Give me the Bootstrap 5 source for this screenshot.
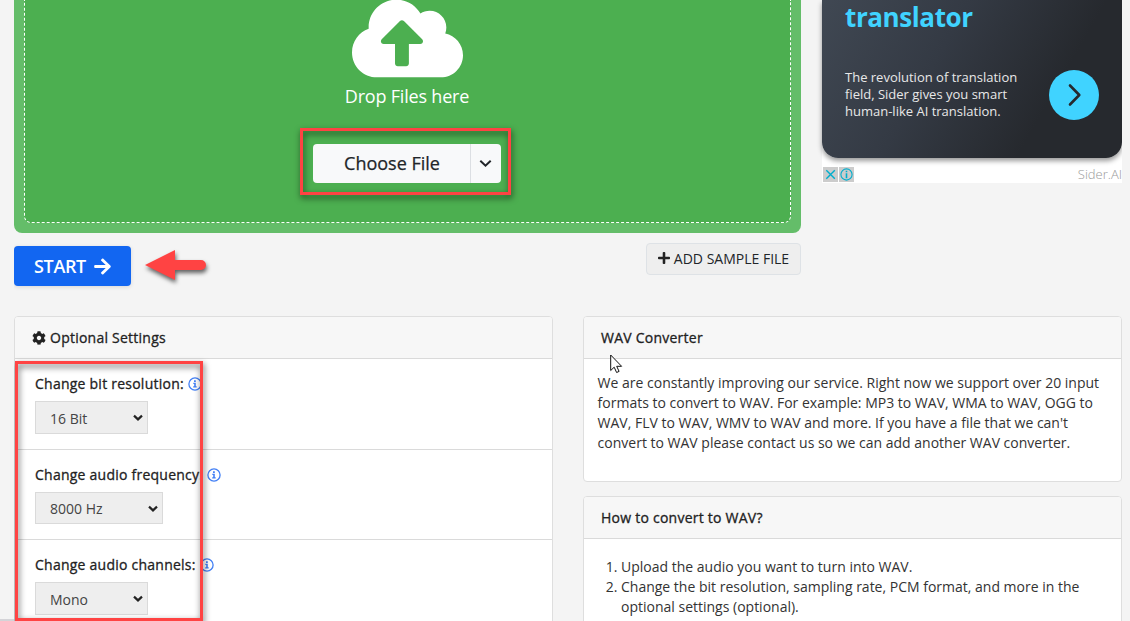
<!DOCTYPE html>
<html lang="en">
<head>
<meta charset="utf-8">
<meta name="viewport" content="width=device-width, initial-scale=1">
<title>WAV Converter</title>
<link rel="stylesheet" href="https://cdn.jsdelivr.net/npm/bootstrap@5.3.0/dist/css/bootstrap.min.css">
<style>
body{font-family:"Open Sans",sans-serif;font-size:14px;line-height:20px;color:#333;background:#f4f4f4;height:621px;overflow:hidden}
.page{width:1108px;height:621px;margin-left:14px;overflow:hidden}
.main-col{width:787px}
.dropzone{height:233px;background:#64bd69;border-radius:0 0 8px 8px;padding:0 10px 10px}
.drop-inner{height:223px;background:#4caf50;border:1px dashed #fff;border-top:0;border-radius:0 0 7px 7px;color:#fff}
.cloud{width:111px;height:89px;margin-top:-6px;flex:none}
.drop-label{font-size:18px;line-height:27px;letter-spacing:-.2px;margin-right:1px}
.choose{height:39px;margin:34px 2px 0 0}
.choose .btn{background:#f8f9fa;border:0;color:#212529;padding:0}
.choose .pick{width:158px;font-size:18px;-webkit-text-stroke:.25px #212529;border-right:1px solid #dcdfe3;border-radius:4px 0 0 4px;padding-left:2px}
.choose .more{width:30px;border-radius:0 4px 4px 0}
.hl{border:3px solid #ff4343;filter:drop-shadow(1px 3px 3px rgba(0,0,0,.65));pointer-events:none}
.hl-pick{left:-13px;top:-16px;width:211px;height:67px}
.hl-set{left:0;top:44px;width:188px;height:260px;z-index:3}
.actions{height:83px;padding-top:10px}
.start{width:117px;height:40px;margin-top:3px;background:#1266f1;font-size:18px;font-weight:600;letter-spacing:-.35px;color:#fff;border:0;border-radius:4px;padding:0;box-shadow:0 1px 4px rgba(0,0,0,.12)}
.arrow{margin:-2px 0 0 -1px}
.sample{width:155px;height:32px;background:#eee;border:1px solid #dee2e6;border-radius:4px;font-size:14px;color:#212529;padding:0 0 2px}
.ad{width:300px;height:183px;background:#fff}
.ad-box{height:158px;border-radius:0 0 16px 16px;background:linear-gradient(120deg,#404853 0%,#343a44 38%,#26292e 73%,#26292e 100%);box-shadow:0 3px 5px rgba(0,0,0,.4);padding:0 22px;color:#e8e8e8}
.ad-title{font-size:26px;line-height:34px;height:36px;font-weight:700;letter-spacing:-.4px;color:#40d3ff;padding-left:1px}
.ad-copy{font-size:13px;line-height:17px;width:180px;margin:33px 0 0 1px}
.ad-go{width:50px;height:50px;margin:34px 1px 0 0}
.ad-tags{gap:1px;padding:1px}
.ad-tag{width:15px;height:15px;background:#ccc}
.ad-brand{font-size:13px;font-weight:300;color:#999;line-height:17px}
.panel{width:539px;border-color:#dedede;border-radius:4px}
.panel .card-header{height:42px;background:#f7f7f7;border-color:#dadada;padding:0 17px;line-height:42px;border-radius:3px 3px 0 0}
.panel .card-header,.opt-label{color:#222;letter-spacing:.24px;-webkit-text-stroke:.3px #222}
.cog{margin-right:4px}
.opt{height:90px;border-bottom:1px solid #dadada;padding:15px 20px 0}
.opt.first{height:91px}
.opt-label{line-height:20px;height:20px}
.pick-wrap{width:max-content;margin-top:7px}
.opt select{appearance:none;display:block;height:33px;border:1px solid #dadada;border-radius:0;background:#eee;color:#444;font:14px "Open Sans",sans-serif;padding:1px 14px 0;width:113px}
.opt select.wide{width:128px;height:32px}
.pick-wrap svg{right:5px;top:13px}
.wav{height:166px}
.wav-body{padding:14px 13px 14px 13.6px;white-space:nowrap}
.cursor{left:26px;top:37px;z-index:2}
.howto{margin-top:14px;height:170px}
.steps{padding:18px 0 0 37px;margin:0}
.status{left:0;bottom:0;width:15px;height:2px;background:#d4d4d8}
</style>
<script src="https://cdn.jsdelivr.net/npm/bootstrap@5.3.0/dist/js/bootstrap.bundle.min.js"></script>
</head>
<body>
<svg class="d-none">
<symbol id="info" viewBox="0 0 14 14"><circle cx="7" cy="7" r="6.1" fill="#fff" stroke="#4380f5" stroke-width="1.3"/><path d="M6 3.2h1.8v1.7H6zM5.3 5.8h2.5v3.4h.9v1.2H5.2V9.2h1V7h-.9z" fill="#4380f5"/></symbol>
<symbol id="chev" viewBox="0 0 10 8"><path d="M1 1.6 5 5.4 9 1.6" fill="none" stroke="#222" stroke-width="2.2"/></symbol>
</svg>
<div class="page">
  <div class="d-flex justify-content-between">
    <main class="main-col">
      <div class="dropzone">
        <div class="drop-inner d-flex flex-column align-items-center">
          <svg class="cloud" viewBox="0 0 640 512" fill="#fff"><path d="M537.6 226.6c4.1-10.7 6.4-22.4 6.4-34.6 0-53-43-96-96-96-19.7 0-38.1 6-53.3 16.2C367 64.2 315.3 32 256 32c-88.4 0-160 71.6-160 160 0 2.7.1 5.4.2 8.1C40.2 219.8 0 273.2 0 336c0 79.5 64.5 144 144 144h368c70.7 0 128-57.3 128-128 0-61.9-44-113.6-102.4-125.4zM393.4 288H328v112c0 8.8-7.2 16-16 16h-48c-8.8 0-16-7.2-16-16V288h-65.4c-14.3 0-21.4-17.2-11.3-27.3l105.4-105.4c6.2-6.2 16.4-6.2 22.6 0l105.4 105.4c10.1 10.1 2.9 27.3-11.3 27.3z"/></svg>
          <div class="drop-label">Drop Files here</div>
          <div class="choose d-flex position-relative">
            <button class="btn pick">Choose File</button>
            <button class="btn more d-flex align-items-center justify-content-center" aria-label="More"><svg width="13" height="9" viewBox="0 0 13 9"><path d="M1.3 1.7 6.5 6.7l5.2-5" fill="none" stroke="#212529" stroke-width="2"/></svg></button>
            <div class="hl hl-pick position-absolute"></div>
          </div>
        </div>
      </div>
      <div class="actions d-flex justify-content-between align-items-start">
        <div class="d-flex align-items-start">
          <button class="btn start d-flex align-items-center justify-content-center gap-2"><span>START</span><svg width="17" height="19" viewBox="0 0 448 512" fill="#fff"><path d="M190.5 66.9l22.2-22.2c9.4-9.4 24.6-9.4 33.9 0L441 239c9.4 9.4 9.4 24.6 0 33.9L246.6 467.3c-9.4 9.4-24.6 9.4-33.9 0l-22.2-22.2c-9.5-9.5-9.3-25 .4-34.3L311.4 296H24c-13.3 0-24-10.7-24-24v-32c0-13.3 10.7-24 24-24h287.4L190.9 101.2c-9.8-9.3-10-24.8-.4-34.3z"/></svg></button>
          <svg class="arrow" width="84" height="50" viewBox="0 0 84 50"><path d="M15 24 45 9v10h26a5 5 0 0 1 0 10H45v10z" fill="#ff4343" style="filter:drop-shadow(1px 3px 2px rgba(0,0,0,.6))"/></svg>
        </div>
        <button class="btn sample d-flex align-items-center justify-content-center"><svg class="me-1" width="12" height="14" viewBox="0 0 448 512" fill="#222"><path d="M416 208H272V64c0-17.67-14.33-32-32-32h-32c-17.67 0-32 14.33-32 32v144H32c-17.67 0-32 14.33-32 32v32c0 17.67 14.33 32 32 32h144v144c0 17.67 14.33 32 32 32h32c17.67 0 32-14.33 32-32V304h144c17.67 0 32-14.33 32-32v-32c0-17.67-14.33-32-32-32z"/></svg>ADD SAMPLE FILE</button>
      </div>
    </main>
    <aside class="ad">
      <div class="ad-box">
        <div class="ad-title">translator</div>
        <div class="d-flex justify-content-between">
          <div class="ad-copy">The revolution of translation<br>field, Sider gives you smart<br>human-like AI translation.</div>
          <svg class="ad-go" viewBox="0 0 50 50"><circle cx="25" cy="25" r="25" fill="#40d3ff"/><path d="M21 15.5 30.3 25 21 34.5" fill="none" stroke="#26292e" stroke-width="2.6" stroke-linecap="round" stroke-linejoin="round"/></svg>
        </div>
      </div>
      <div class="d-flex justify-content-between pt-2">
        <div class="ad-tags d-flex">
          <svg class="ad-tag" viewBox="0 0 15 15"><path d="m3.3 3.3 8.5 8.5m0-8.5-8.5 8.5" stroke="#00aecd" stroke-width="1.4"/></svg>
          <svg class="ad-tag" viewBox="0 0 15 15"><circle cx="7.5" cy="7.5" r="5.6" fill="none" stroke="#00aecd" stroke-width="1.1"/><path d="M6.7 3.8h1.6v1.5H6.7zM6.7 6.3h1.6v5H6.7z" fill="#00aecd"/></svg>
        </div>
        <div class="ad-brand">Sider.AI</div>
      </div>
    </aside>
  </div>
  <div class="d-flex justify-content-between align-items-start">
    <section class="card panel position-relative">
      <div class="card-header d-flex align-items-center"><svg class="cog" width="14" height="14" viewBox="0 0 512 512" fill="#222"><path d="M487.4 315.7l-42.6-24.6c4.3-23.2 4.3-47 0-70.2l42.6-24.6c4.9-2.8 7.1-8.6 5.5-14-11.1-35.6-30-67.8-54.7-94.6-3.8-4.1-10-5.1-14.8-2.3L380.8 110c-17.9-15.4-38.5-27.3-60.8-35.1V25.8c0-5.6-3.9-10.5-9.4-11.7-36.7-8.2-74.3-7.8-109.2 0-5.5 1.2-9.4 6.1-9.4 11.7V75c-22.2 7.9-42.8 19.8-60.8 35.1L88.7 85.5c-4.9-2.8-11-1.9-14.8 2.3-24.7 26.7-43.6 58.9-54.7 94.6-1.7 5.4.6 11.2 5.5 14L67.3 221c-4.3 23.2-4.3 47 0 70.2l-42.6 24.6c-4.9 2.8-7.1 8.6-5.5 14 11.1 35.6 30 67.8 54.7 94.6 3.8 4.1 10 5.1 14.8 2.3l42.6-24.6c17.9 15.4 38.5 27.3 60.8 35.1v49.2c0 5.6 3.9 10.5 9.4 11.7 36.7 8.2 74.3 7.8 109.2 0 5.5-1.2 9.4-6.1 9.4-11.7v-49.2c22.2-7.9 42.8-19.8 60.8-35.1l42.6 24.6c4.9 2.8 11 1.9 14.8-2.3 24.7-26.7 43.6-58.9 54.7-94.6 1.5-5.5-.7-11.3-5.6-14.1zM256 336c-44.1 0-80-35.9-80-80s35.9-80 80-80 80 35.9 80 80-35.9 80-80 80z"/></svg>Optional Settings</div>
      <div class="opt first">
        <div class="opt-label d-flex align-items-center gap-1">Change bit resolution: <svg width="14" height="14"><use href="#info"/></svg></div>
        <div class="pick-wrap position-relative"><select><option>16 Bit</option></select><svg class="position-absolute" width="10" height="8"><use href="#chev"/></svg></div>
      </div>
      <div class="opt">
        <div class="opt-label d-flex align-items-center gap-1">Change audio frequency: <svg width="14" height="14"><use href="#info"/></svg></div>
        <div class="pick-wrap position-relative"><select class="wide"><option>8000 Hz</option></select><svg class="position-absolute" width="10" height="8"><use href="#chev"/></svg></div>
      </div>
      <div class="opt">
        <div class="opt-label d-flex align-items-center gap-1">Change audio channels: <svg width="14" height="14"><use href="#info"/></svg></div>
        <div class="pick-wrap position-relative"><select><option>Mono</option></select><svg class="position-absolute" width="10" height="8"><use href="#chev"/></svg></div>
      </div>
      <div class="hl hl-set position-absolute"></div>
    </section>
    <div>
      <section class="card panel position-relative wav">
        <div class="card-header">WAV Converter</div>
        <div class="wav-body">We are constantly improving our service. Right now we support over 20 input<br>formats to convert to WAV. For example: MP3 to WAV, WMA to WAV, OGG to<br>WAV, FLV to WAV, WMV to WAV and more. If you have a file that we can't<br>convert to WAV please contact us so we can add another WAV converter.</div>
        <svg class="cursor position-absolute" width="13" height="20" viewBox="0 0 13 20"><path d="M.7 1v15.5l3.5-3.3 2.4 5.3 2.5-1.1-2.4-5.1h4.9z" fill="#fff" stroke="#111" stroke-width="1"/></svg>
      </section>
      <section class="card panel howto">
        <div class="card-header">How to convert to WAV?</div>
        <ol class="steps"><li>Upload the audio you want to turn into WAV.</li><li>Change the bit resolution, sampling rate, PCM format, and more in the<br>optional settings (optional).</li></ol>
      </section>
    </div>
  </div>
</div>
<div class="status position-absolute"></div>
</body>
</html>
